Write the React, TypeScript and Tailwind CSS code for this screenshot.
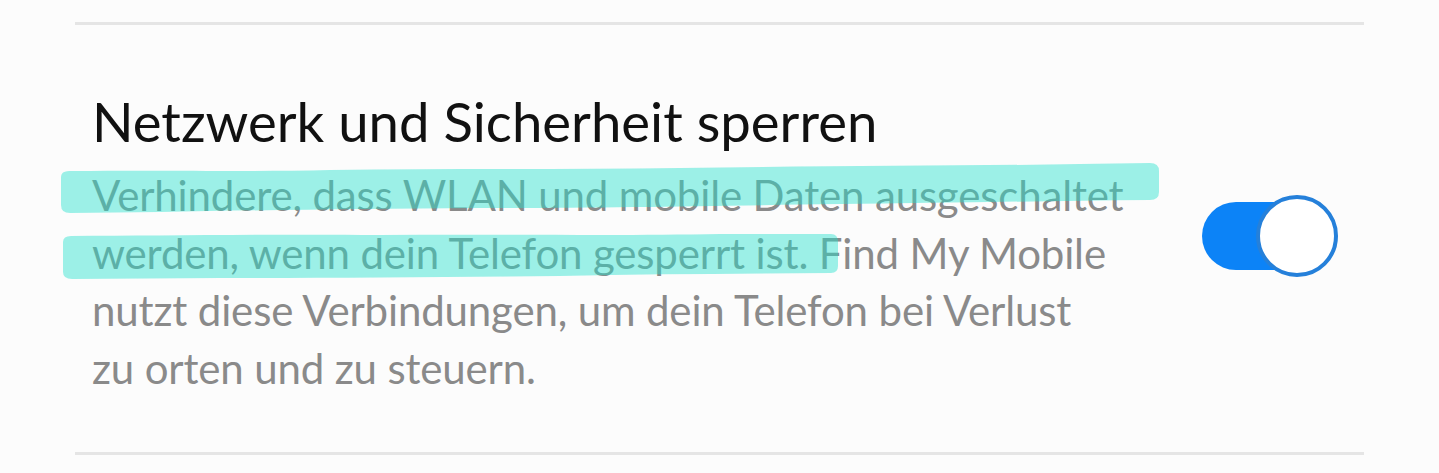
import React from "react";

export default function App() {
  return (
    <div
      className="relative w-[1439px] h-[473px] bg-[#fcfcfc] pt-[22px] overflow-hidden"
      style={{ fontFamily: "Lato, 'Open Sans', sans-serif" }}
    >
      <div className="mx-[75px] h-[3px] bg-[#e5e5e5]" />
      <div className="mx-[75px] flex items-start h-[427px]">
        <div className="flex-1 pl-[17px] pt-[64px]">
          <div className="text-[54.5px] leading-[64px] text-[#111111]">
            Netzwerk und Sicherheit sperren
          </div>
          <div className="mt-[14px] text-[42px] leading-[57.5px] text-[#8a8a8a] tracking-[-0.15px]">
            Verhindere, dass WLAN und mobile Daten ausgeschaltet
            <br />
            werden, wenn dein Telefon gesperrt ist. Find My Mobile
            <br />
            nutzt diese Verbindungen, um dein Telefon bei Verlust
            <br />
            zu orten und zu steuern.
          </div>
        </div>
        <div className="relative w-[136px] h-[82px] mr-[26px] mt-[170px] flex items-center">
          <div className="w-[120px] h-[68px] rounded-full bg-[#0c83f7]" />
          <div className="absolute right-0 top-0 w-[82px] h-[82px] rounded-full bg-white border-[4px] border-[#2580da]" />
        </div>
      </div>
      <div className="mx-[75px] h-[3px] bg-[#e5e5e5]" />
      <svg
        className="absolute left-0 top-0 pointer-events-none"
        width="1439"
        height="473"
        viewBox="0 0 1439 473"
      >
        <path
          d="M61,178 C61,172 64,171 72,171 C180,170 250,172 330,170 C450,168 560,170 680,168 C820,166 960,166 1080,164 L1150,163 Q1159,163 1159,171 L1159,192 Q1159,200 1150,200 C1040,201 940,203 840,204 C700,206 600,208 480,208 C360,209 260,210 160,212 L70,213 Q61,213 61,205 Z"
          fill="rgba(34,226,205,0.44)"
        />
        <path
          d="M63,242 Q63,236 71,236 C160,236 260,234 380,235 C500,234 620,236 720,234 L831,234 Q838,234 838,242 L838,266 Q838,273 831,273 C740,274 650,274 560,276 C440,277 330,278 220,278 L72,279 Q63,279 63,272 Z"
          fill="rgba(34,226,205,0.44)"
        />
      </svg>
    </div>
  );
}
